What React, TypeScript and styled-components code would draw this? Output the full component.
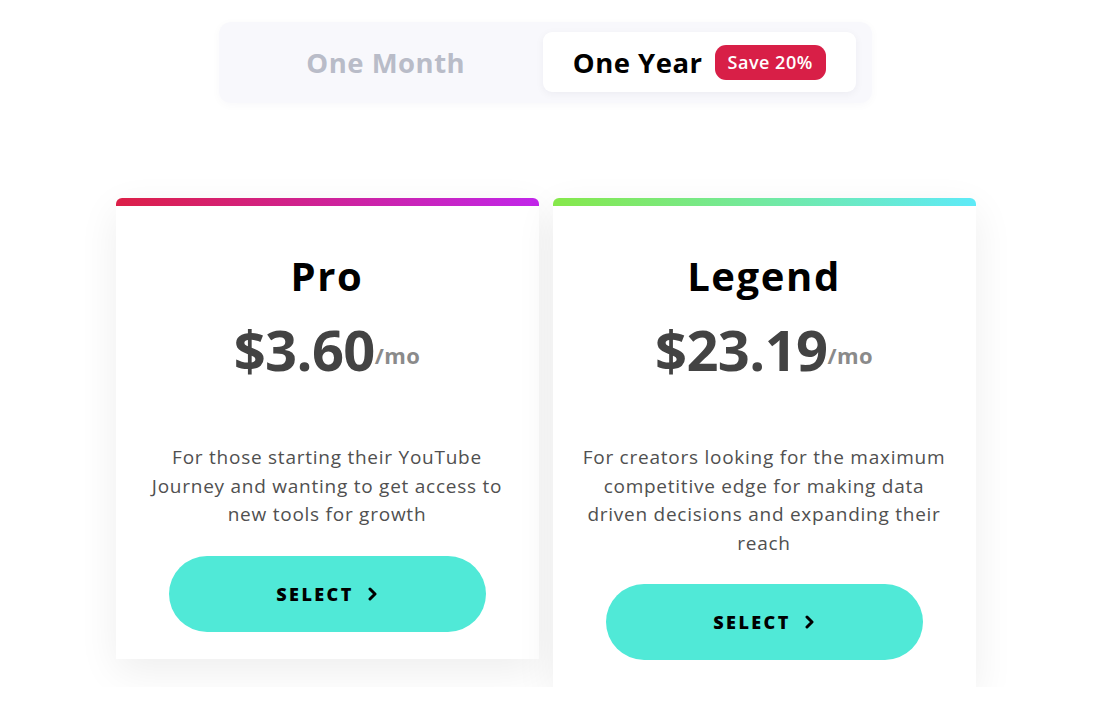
import React, { useState } from "react";
import styled, { createGlobalStyle } from "styled-components";

const Global = createGlobalStyle`
  html, body { margin: 0; padding: 0; background: #ffffff; }
  body { font-family: "Open Sans", "DejaVu Sans", sans-serif; -webkit-font-smoothing: antialiased; }
  * { box-sizing: border-box; }
`;

const Page = styled.div`
  display: flex;
  flex-direction: column;
  align-items: center;
  padding: 22px 7px 0 0;
`;

const Toggle = styled.div`
  width: 653px;
  height: 81px;
  display: grid;
  grid-template-columns: 1fr 1fr;
  padding: 10px 16px 11px 10px;
  background: #f8f8fc;
  border-radius: 12px;
  box-shadow: 0 2px 10px rgba(30, 30, 80, 0.03);
`;

const Tab = styled.button<{ $active?: boolean }>`
  border: none;
  font-family: inherit;
  display: flex;
  align-items: center;
  justify-content: center;
  gap: 12px;
  border-radius: 9px;
  font-size: 27.5px;
  font-weight: 700;
  letter-spacing: 0.5px;
  cursor: pointer;
  background: ${(p) => (p.$active ? "#ffffff" : "transparent")};
  color: ${(p) => (p.$active ? "#000000" : "#b9bcc8")};
  box-shadow: ${(p) => (p.$active ? "0 2px 8px rgba(20, 20, 60, 0.05)" : "none")};
  padding: 0;
`;

const Badge = styled.span`
  display: inline-flex;
  align-items: center;
  height: 35px;
  padding: 0 13px;
  border-radius: 11px;
  background: #d81f47;
  color: #ffffff;
  font-size: 18px;
  font-weight: 600;
  letter-spacing: 0.5px;
`;

const Cards = styled.div`
  display: flex;
  align-items: flex-start;
  gap: 14px;
  margin-top: 95px;
`;

const Card = styled.div`
  width: 423px;
  background: #ffffff;
  border-radius: 6px 6px 0 0;
  box-shadow: 0 12px 40px rgba(0, 0, 0, 0.07);
  display: flex;
  flex-direction: column;
  align-items: center;
  padding-bottom: 27px;
  overflow: hidden;
`;

const Bar = styled.div<{ $from: string; $to: string }>`
  align-self: stretch;
  height: 8px;
  background: linear-gradient(90deg, ${(p) => p.$from}, ${(p) => p.$to});
`;

const Title = styled.h2`
  margin: 47px 0 0;
  font-size: 40px;
  line-height: 46px;
  font-weight: 700;
  color: #000000;
  letter-spacing: 1.6px;
`;

const Price = styled.div`
  margin-top: 18px;
  color: #434343;
  font-size: 56px;
  line-height: 64px;
  font-weight: 700;
  letter-spacing: -0.6px;
  white-space: nowrap;
`;

const Per = styled.span`
  font-size: 22px;
  font-weight: 700;
  color: #8a8a8a;
  letter-spacing: 0.4px;
  vertical-align: 7px;
`;

const Desc = styled.p`
  margin: 56px 0 0;
  max-width: 366px;
  text-align: center;
  font-size: 19px;
  line-height: 28.5px;
  color: #505050;
  font-weight: 400;
  letter-spacing: 0.75px;
`;

const SelectButton = styled.button`
  margin-top: 27px;
  width: 317px;
  height: 76px;
  border: none;
  border-radius: 38px;
  background: #50e9d7;
  color: #000000;
  font-family: inherit;
  font-size: 18px;
  font-weight: 800;
  letter-spacing: 2.4px;
  display: flex;
  align-items: center;
  justify-content: center;
  gap: 14px;
  cursor: pointer;
`;

const Chevron = () => (
  <svg width="10" height="14" viewBox="0 0 10 14" fill="none">
    <polyline points="2,2 7,7 2,12" stroke="#000" strokeWidth="3" strokeLinecap="round" strokeLinejoin="round" />
  </svg>
);

type Plan = { name: string; price: string; desc: string; from: string; to: string };

const plans: Plan[] = [
  {
    name: "Pro",
    price: "$3.60",
    desc: "For those starting their YouTube Journey and wanting to get access to new tools for growth",
    from: "#dc1f47",
    to: "#c126ea",
  },
  {
    name: "Legend",
    price: "$23.19",
    desc: "For creators looking for the maximum competitive edge for making data driven decisions and expanding their reach",
    from: "#86e84a",
    to: "#5eeaf8",
  },
];

export default function App() {
  const [yearly, setYearly] = useState(true);
  return (
    <>
      <Global />
      <Page>
        <Toggle>
          <Tab $active={!yearly} onClick={() => setYearly(false)}>One Month</Tab>
          <Tab $active={yearly} onClick={() => setYearly(true)}>
            One Year <Badge>Save 20%</Badge>
          </Tab>
        </Toggle>
        <Cards>
          {plans.map((p) => (
            <Card key={p.name}>
              <Bar $from={p.from} $to={p.to} />
              <Title>{p.name}</Title>
              <Price>
                {p.price}
                <Per>/mo</Per>
              </Price>
              <Desc>{p.desc}</Desc>
              <SelectButton>
                SELECT <Chevron />
              </SelectButton>
            </Card>
          ))}
        </Cards>
      </Page>
    </>
  );
}
